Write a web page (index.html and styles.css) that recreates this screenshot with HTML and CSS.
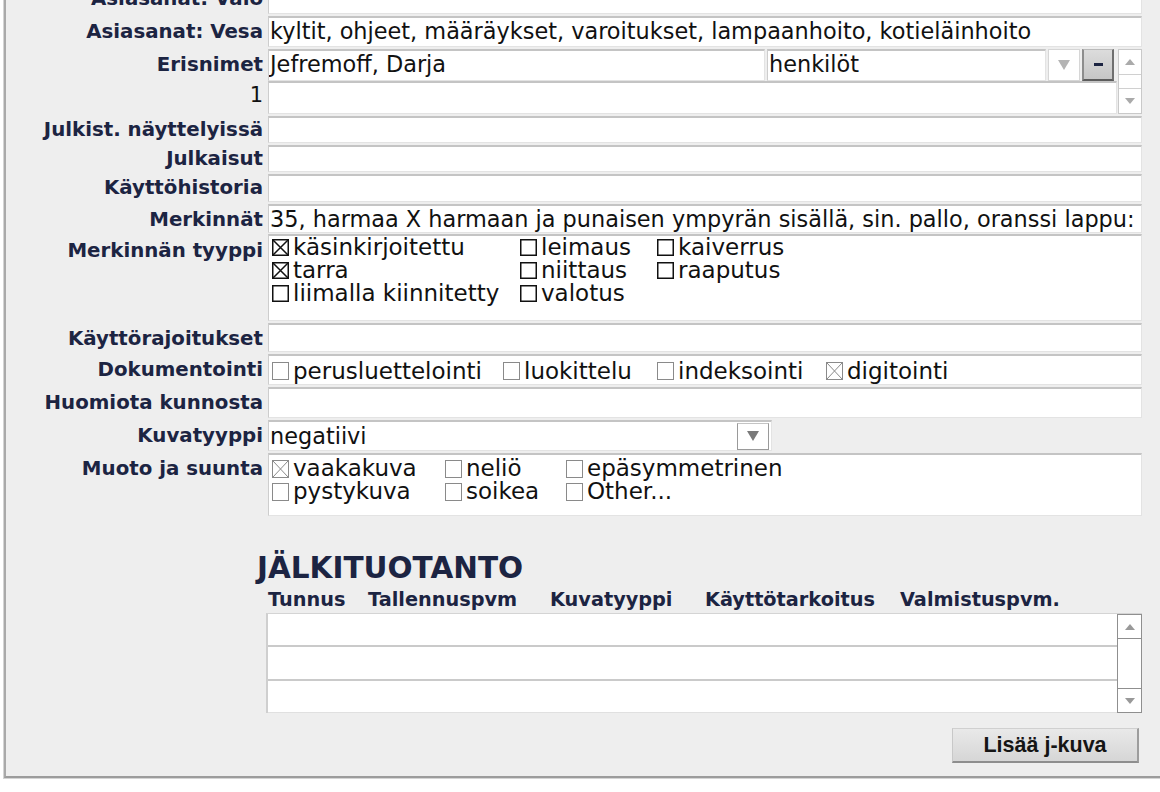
FILE: index.html
```html
<!DOCTYPE html>
<html lang="fi">
<head>
<meta charset="utf-8">
<title>Kuvatiedot</title>
<link rel="stylesheet" href="styles.css">
</head>
<body>
<div class="panel">
  <div class="form">
    <div class="label">Asiasanat: Valo</div>
    <div class="field"></div>

    <div class="label">Asiasanat: Vesa</div>
    <div class="field">kyltit, ohjeet, määräykset, varoitukset, lampaanhoito, kotieläinhoito</div>

    <div class="label label-stack"><span>Erisnimet</span><span class="num">1</span></div>
    <div class="names">
      <div class="names-main">
        <div class="names-top">
          <div class="box name-input">Jefremoff, Darja</div>
          <div class="box name-select">henkilöt</div>
          <div class="drop"><svg width="12" height="10" viewBox="0 0 12 10"><path d="M0 0 H12 L6 10 Z" fill="#b4b4b4"/></svg></div>
          <div class="minus"><span class="dash"></span></div>
        </div>
        <div class="box names-bottom"></div>
      </div>
      <div class="vscroll">
        <div class="sb-btn"><svg width="10" height="6" viewBox="0 0 10 6"><path d="M0 6 L5 0 L10 6 Z" fill="#aaa"/></svg></div>
        <div class="sb-track"></div>
        <div class="sb-btn"><svg width="10" height="6" viewBox="0 0 10 6"><path d="M0 0 L5 6 L10 0 Z" fill="#aaa"/></svg></div>
      </div>
    </div>

    <div class="label short">Julkist. näyttelyissä</div>
    <div class="field short"></div>

    <div class="label short">Julkaisut</div>
    <div class="field short"></div>

    <div class="label short">Käyttöhistoria</div>
    <div class="field short tall"></div>

    <div class="label">Merkinnät</div>
    <div class="field r29">35, harmaa X harmaan ja punaisen ympyrän sisällä, sin. pallo, oranssi lappu:</div>

    <div class="label">Merkinnän tyyppi</div>
    <div class="checks checks-type">
      <div class="cb"><svg class="ck" width="17" height="17" viewBox="0 0 17 17"><rect x="0.75" y="0.75" width="15.5" height="15.5" fill="none" stroke="#111" stroke-width="1.5"/><path d="M1 1 L16 16 M16 1 L1 16" stroke="#111" stroke-width="1.5"/></svg>käsinkirjoitettu</div>
      <div class="cb"><svg class="ck" width="17" height="17" viewBox="0 0 17 17"><rect x="0.75" y="0.75" width="15.5" height="15.5" fill="none" stroke="#111" stroke-width="1.5"/></svg>leimaus</div>
      <div class="cb"><svg class="ck" width="17" height="17" viewBox="0 0 17 17"><rect x="0.75" y="0.75" width="15.5" height="15.5" fill="none" stroke="#111" stroke-width="1.5"/></svg>kaiverrus</div>
      <div class="cb"><svg class="ck" width="17" height="17" viewBox="0 0 17 17"><rect x="0.75" y="0.75" width="15.5" height="15.5" fill="none" stroke="#111" stroke-width="1.5"/><path d="M1 1 L16 16 M16 1 L1 16" stroke="#111" stroke-width="1.5"/></svg>tarra</div>
      <div class="cb"><svg class="ck" width="17" height="17" viewBox="0 0 17 17"><rect x="0.75" y="0.75" width="15.5" height="15.5" fill="none" stroke="#111" stroke-width="1.5"/></svg>niittaus</div>
      <div class="cb"><svg class="ck" width="17" height="17" viewBox="0 0 17 17"><rect x="0.75" y="0.75" width="15.5" height="15.5" fill="none" stroke="#111" stroke-width="1.5"/></svg>raaputus</div>
      <div class="cb"><svg class="ck" width="17" height="17" viewBox="0 0 17 17"><rect x="0.75" y="0.75" width="15.5" height="15.5" fill="none" stroke="#111" stroke-width="1.5"/></svg>liimalla kiinnitetty</div>
      <div class="cb"><svg class="ck" width="17" height="17" viewBox="0 0 17 17"><rect x="0.75" y="0.75" width="15.5" height="15.5" fill="none" stroke="#111" stroke-width="1.5"/></svg>valotus</div>
    </div>

    <div class="label">Käyttörajoitukset</div>
    <div class="field r29"></div>

    <div class="label">Dokumentointi</div>
    <div class="checks checks-doc">
      <div class="cb"><svg class="ck" width="17" height="18" viewBox="0 0 17 18"><rect x="0.5" y="0.5" width="16" height="17" fill="none" stroke="#8a8a8a" stroke-width="1"/></svg>perusluettelointi</div>
      <div class="cb"><svg class="ck" width="17" height="18" viewBox="0 0 17 18"><rect x="0.5" y="0.5" width="16" height="17" fill="none" stroke="#8a8a8a" stroke-width="1"/></svg>luokittelu</div>
      <div class="cb"><svg class="ck" width="17" height="18" viewBox="0 0 17 18"><rect x="0.5" y="0.5" width="16" height="17" fill="none" stroke="#8a8a8a" stroke-width="1"/></svg>indeksointi</div>
      <div class="cb"><svg class="ck" width="17" height="18" viewBox="0 0 17 18"><rect x="0.5" y="0.5" width="16" height="17" fill="none" stroke="#8a8a8a" stroke-width="1"/><path d="M1 1 L16 17 M16 1 L1 17" stroke="#8a8a8a" stroke-width="1"/></svg>digitointi</div>
    </div>

    <div class="label">Huomiota kunnosta</div>
    <div class="field"></div>

    <div class="label">Kuvatyyppi</div>
    <div class="select-row">
      <div class="select-field">
        <span class="select-text">negatiivi</span>
        <span class="select-btn"><svg width="12" height="10" viewBox="0 0 12 10"><path d="M0 0 H12 L6 10 Z" fill="#7a7a7a"/></svg></span>
      </div>
    </div>

    <div class="label">Muoto ja suunta</div>
    <div class="checks checks-shape">
      <div class="cb"><svg class="ck" width="17" height="18" viewBox="0 0 17 18"><rect x="0.5" y="0.5" width="16" height="17" fill="none" stroke="#8a8a8a" stroke-width="1"/><path d="M1 1 L16 17 M16 1 L1 17" stroke="#8a8a8a" stroke-width="1"/></svg>vaakakuva</div>
      <div class="cb"><svg class="ck" width="17" height="18" viewBox="0 0 17 18"><rect x="0.5" y="0.5" width="16" height="17" fill="none" stroke="#8a8a8a" stroke-width="1"/></svg>neliö</div>
      <div class="cb"><svg class="ck" width="17" height="18" viewBox="0 0 17 18"><rect x="0.5" y="0.5" width="16" height="17" fill="none" stroke="#8a8a8a" stroke-width="1"/></svg>epäsymmetrinen</div>
      <div class="cb"><svg class="ck" width="17" height="18" viewBox="0 0 17 18"><rect x="0.5" y="0.5" width="16" height="17" fill="none" stroke="#8a8a8a" stroke-width="1"/></svg>pystykuva</div>
      <div class="cb"><svg class="ck" width="17" height="18" viewBox="0 0 17 18"><rect x="0.5" y="0.5" width="16" height="17" fill="none" stroke="#8a8a8a" stroke-width="1"/></svg>soikea</div>
      <div class="cb"><svg class="ck" width="17" height="18" viewBox="0 0 17 18"><rect x="0.5" y="0.5" width="16" height="17" fill="none" stroke="#8a8a8a" stroke-width="1"/></svg>Other...</div>
    </div>
  </div>

  <div class="post">
    <h2 class="post-title">JÄLKITUOTANTO</h2>
    <div class="post-body">
      <div class="cols">
        <span>Tunnus</span>
        <span>Tallennuspvm</span>
        <span>Kuvatyyppi</span>
        <span>Käyttötarkoitus</span>
        <span>Valmistuspvm.</span>
      </div>
      <div class="table">
        <div class="rows">
          <div class="trow"></div>
          <div class="trow"></div>
          <div class="trow"></div>
        </div>
        <div class="vscroll tscroll">
          <div class="sb-btn"><svg width="10" height="6" viewBox="0 0 10 6"><path d="M0 6 L5 0 L10 6 Z" fill="#999"/></svg></div>
          <div class="sb-track"></div>
          <div class="sb-btn"><svg width="10" height="6" viewBox="0 0 10 6"><path d="M0 0 L5 6 L10 0 Z" fill="#999"/></svg></div>
        </div>
      </div>
      <div class="actions">
        <button class="add-btn" type="button">Lisää j-kuva</button>
      </div>
    </div>
  </div>
</div>
</body>
</html>
```

FILE: styles.css
```css
html, body {
  margin: 0;
  padding: 0;
  overflow: hidden;
  background: #ffffff;
}

body {
  width: 1160px;
  height: 792px;
  font-family: "DejaVu Sans", Verdana, sans-serif;
  color: #111111;
}

.panel {
  box-sizing: border-box;
  width: 1200px;
  height: 795px;
  margin: -17px 0 0 4px;
  background: #eeeeee;
  border-left: 2px solid #a9a9a9;
  border-bottom: 2px solid #9c9c9c;
  box-shadow: -1px 1px 0 #d4d4d4;
}

.form {
  display: grid;
  grid-template-columns: 257px 874px;
  column-gap: 5px;
  row-gap: 2px;
  align-items: start;
}

.label {
  grid-column: 1;
  text-align: right;
  font-weight: bold;
  font-size: 19.8px;
  line-height: 25px;
  padding-top: 3px;
  color: #1c2442;
  white-space: nowrap;
}

.label.short {
  padding-top: 1px;
}

.label-stack {
  display: flex;
  flex-direction: column;
  align-items: flex-end;
}

.label-stack .num {
  margin-top: 6px;
  font-weight: normal;
  font-size: 21px;
  color: #111111;
}

.field,
.box,
.checks,
.select-field {
  box-sizing: border-box;
  background: #ffffff;
  border-top: 2px solid #c4c4c4;
  border-left: 1px solid #cdcdcd;
  border-right: 1px solid #e3e3e3;
  border-bottom: 1px solid #e3e3e3;
}

.field {
  grid-column: 2;
  height: 31px;
  padding: 1px 2px 0 1px;
  font-size: 22.4px;
  line-height: 25px;
  white-space: nowrap;
  overflow: hidden;
}

.field.short {
  height: 27px;
  padding-top: 0;
}

.field.short.tall {
  height: 28px;
}

.field.r29 {
  height: 29px;
}

/* Erisnimet composite */
.names {
  grid-column: 2;
  display: flex;
  height: 65px;
}

.names-main {
  display: flex;
  flex-direction: column;
  width: 849px;
}

.names-top {
  display: flex;
  gap: 2px;
  height: 32px;
}

.box {
  font-size: 22.4px;
  line-height: 25px;
  padding: 1px 2px 0 1px;
  white-space: nowrap;
  overflow: hidden;
}

.name-input {
  width: 497px;
}

.name-select {
  width: 279px;
}

.drop {
  box-sizing: border-box;
  width: 32px;
  background: #ffffff;
  border: 1px solid #d6d6d6;
  display: flex;
  align-items: center;
  justify-content: center;
}

.minus {
  box-sizing: border-box;
  width: 32px;
  background: linear-gradient(#dcdcdc, #c6c6c6);
  border-style: solid;
  border-width: 1px 2px 2px 2px;
  border-color: #b9b9b9 #6f6f6f #5c5c5c #8d8d8d;
  display: flex;
  align-items: center;
  justify-content: center;
}

.dash {
  width: 9px;
  height: 3px;
  background: #1c2442;
}

.names-bottom {
  flex: 1;
}

.vscroll {
  box-sizing: border-box;
  width: 24px;
  margin-left: 1px;
  display: flex;
  flex-direction: column;
  background: #ffffff;
  border: 1px solid #c9c9c9;
}

.sb-btn {
  height: 24px;
  display: flex;
  align-items: center;
  justify-content: center;
  background: #ffffff;
  border-bottom: 1px solid #d0d0d0;
}

.sb-btn:last-child {
  border-bottom: none;
  border-top: 1px solid #d0d0d0;
}

.sb-track {
  flex: 1;
}

/* checkbox groups */
.checks {
  grid-column: 2;
  display: grid;
  padding: 0 0 0 3px;
  font-size: 23px;
  line-height: 23px;
}

.checks-type {
  grid-template-columns: 248px 137px auto;
  padding-bottom: 15px;
  margin-top: -1px;
}

.checks-doc {
  grid-template-columns: 231px 154px 169px auto;
  height: 31px;
  padding-top: 2px;
}

.checks-shape {
  grid-template-columns: 173px 121px auto;
  padding-top: 2px;
  padding-bottom: 12px;
}

.cb {
  display: flex;
  align-items: center;
  gap: 4px;
  white-space: nowrap;
}

.ck {
  flex: none;
}

/* select */
.select-row {
  grid-column: 2;
}

.select-field {
  width: 504px;
  height: 31px;
  display: flex;
  align-items: center;
  padding-left: 1px;
  font-size: 22.4px;
  line-height: 25px;
}

.select-text {
  flex: 1;
}

.select-btn {
  box-sizing: border-box;
  width: 32px;
  height: 27px;
  margin-right: 2px;
  border: 1px solid #9a9a9a;
  border-top-color: #c4c4c4;
  background: #ffffff;
  display: flex;
  align-items: center;
  justify-content: center;
}

/* post production */
.post {
  padding-left: 251px;
  margin-top: 35px;
}

.post-title {
  margin: 0;
  font-size: 29.5px;
  line-height: 34px;
  font-weight: bold;
  color: #1c2442;
}

.post-body {
  margin-left: 9px;
  width: 876px;
}

.cols {
  display: grid;
  grid-template-columns: 100px 182px 155px 195px auto;
  padding-left: 2px;
  margin-top: 4px;
  font-size: 19.3px;
  line-height: 22px;
  font-weight: bold;
  color: #1c2442;
  white-space: nowrap;
}

.table {
  display: flex;
  margin-top: 2px;
  height: 99px;
  background: #ffffff;
  border-left: 2px solid #cfcfcf;
  border-top: 1px solid #d4d4d4;
}

.rows {
  flex: 1;
  display: flex;
  flex-direction: column;
}

.trow {
  flex: 1;
  border-bottom: 2px solid #cacaca;
}

.trow:last-child {
  border-bottom: 1px solid #e0e0e0;
}

.tscroll {
  width: 25px;
  margin-left: 0;
  border: 1px solid #8f8f8f;
}

.tscroll .sb-btn {
  height: 23px;
  border-color: #8f8f8f;
}

.actions {
  display: flex;
  justify-content: flex-end;
  padding-right: 3px;
  margin-top: 15px;
}

.add-btn {
  box-sizing: border-box;
  width: 187px;
  height: 35px;
  font-family: "Liberation Sans", Arial, sans-serif;
  font-weight: bold;
  font-size: 21.5px;
  color: #151515;
  background: linear-gradient(#e9e9e9, #d6d6d6);
  border-style: solid;
  border-width: 1px 2px 2px 1px;
  border-color: #d0d0d0 #9d9d9d #8e8e8e #c8c8c8;
  padding: 0;
}
```
